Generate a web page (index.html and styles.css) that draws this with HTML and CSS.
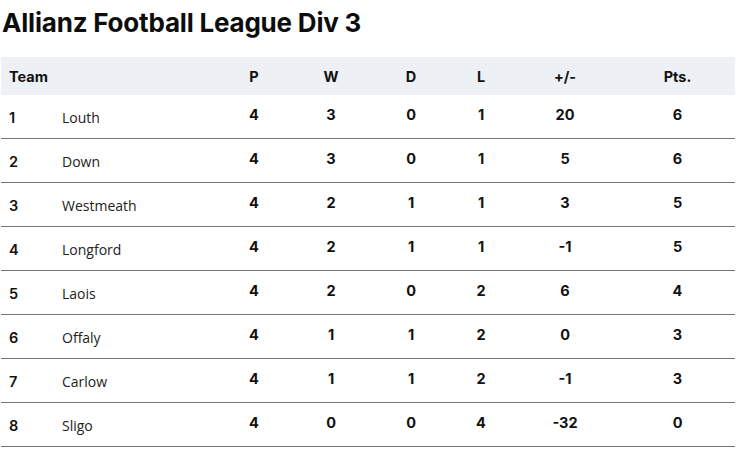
FILE: index.html
```html
<!DOCTYPE html>
<html>
<head>
<meta charset="utf-8">
<link rel="stylesheet" href="styles.css">
</head>
<body>
<h1 class="title">Allianz Football League Div 3</h1>
<table class="league">
  <colgroup>
    <col class="c-rank"><col class="c-name"><col class="c-p"><col class="c-w"><col class="c-d"><col class="c-l"><col class="c-gd"><col class="c-pts">
  </colgroup>
  <thead>
    <tr>
      <th class="th-team" colspan="2">Team</th>
      <th>P</th><th>W</th><th>D</th><th>L</th><th>+/-</th><th>Pts.</th>
    </tr>
  </thead>
  <tbody>
    <tr><td class="rank">1</td><td class="name">Louth</td><td>4</td><td>3</td><td>0</td><td>1</td><td>20</td><td>6</td></tr>
    <tr><td class="rank">2</td><td class="name">Down</td><td>4</td><td>3</td><td>0</td><td>1</td><td>5</td><td>6</td></tr>
    <tr><td class="rank">3</td><td class="name">Westmeath</td><td>4</td><td>2</td><td>1</td><td>1</td><td>3</td><td>5</td></tr>
    <tr><td class="rank">4</td><td class="name">Longford</td><td>4</td><td>2</td><td>1</td><td>1</td><td>-1</td><td>5</td></tr>
    <tr><td class="rank">5</td><td class="name">Laois</td><td>4</td><td>2</td><td>0</td><td>2</td><td>6</td><td>4</td></tr>
    <tr><td class="rank">6</td><td class="name">Offaly</td><td>4</td><td>1</td><td>1</td><td>2</td><td>0</td><td>3</td></tr>
    <tr><td class="rank">7</td><td class="name">Carlow</td><td>4</td><td>1</td><td>1</td><td>2</td><td>-1</td><td>3</td></tr>
    <tr><td class="rank">8</td><td class="name">Sligo</td><td>4</td><td>0</td><td>0</td><td>4</td><td>-32</td><td>0</td></tr>
  </tbody>
</table>
</body>
</html>
```
FILE: styles.css
```css
html, body {
  margin: 0;
  padding: 0;
  background: #ffffff;
}
body {
  padding: 0 0 0 1px;
  font-family: "Inter", "Liberation Sans", sans-serif;
  color: #111111;
}
.title {
  margin: 0;
  padding: 8px 0 0 1px;
  height: 57px;
  box-sizing: border-box;
  font-family: "Inter", sans-serif;
  font-weight: 700;
  font-size: 26px;
  line-height: 30px;
  letter-spacing: -0.2px;
  color: #0d0d0d;
}
.league {
  border-collapse: collapse;
  table-layout: fixed;
  width: 734px;
}
.c-rank { width: 52px; }
.c-name { width: 163px; }
.c-p { width: 76px; }
.c-w { width: 78px; }
.c-d { width: 82px; }
.c-l { width: 58px; }
.c-gd { width: 110px; }
.c-pts { width: 115px; }
.league thead th {
  background: #edf0f4;
  height: 38px;
  padding: 0;
  font-weight: 700;
  font-size: 14.5px;
  text-align: center;
  color: #111;
}
.league thead .th-team {
  text-align: left;
  padding-left: 8px;
}
.league tbody td {
  height: 39px;
  padding: 0 0 4px 0;
  border-bottom: 1px solid #6f757c;
  font-weight: 700;
  font-size: 14.5px;
  text-align: center;
  color: #111;
}
.league tbody td.rank {
  text-align: left;
  padding-left: 8px;
  padding-bottom: 0;
  padding-top: 2px;
  height: 41px;
  font-weight: 600;
}
.league tbody td.name {
  text-align: left;
  padding-left: 9px;
  padding-bottom: 0;
  padding-top: 2px;
  height: 41px;
  font-family: "Open Sans", "Noto Sans", sans-serif;
  font-weight: 400;
  font-size: 14px;
  color: #222;
}
```
